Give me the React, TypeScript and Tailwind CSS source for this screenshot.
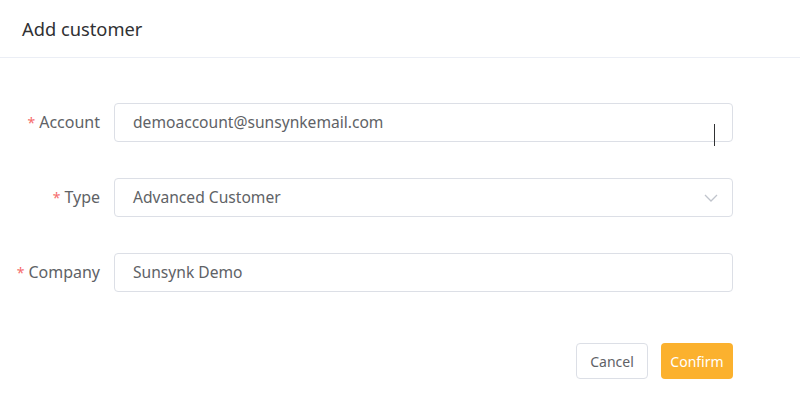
import React from 'react';

const fields = [
  { label: 'Account', value: 'demoaccount@sunsynkemail.com', select: false },
  { label: 'Type', value: 'Advanced Customer', select: true },
  { label: 'Company', value: 'Sunsynk Demo', select: false },
];

export default function App() {
  return (
    <div className="w-[800px] h-[394px] bg-white font-['Noto_Sans',sans-serif] text-[#606266]">
      {/* Header */}
      <div className="h-[58px] border-b border-[#ebeef5] flex items-center px-[22px]">
        <span className="text-[18.3px] text-[#303133]">Add customer</span>
      </div>

      {/* Form */}
      <div className="pt-[45px] pr-[67px] flex flex-col gap-[36px]">
        {fields.map((f, i) => (
          <div key={f.label} className="flex items-center gap-[14px]">
            <label className="w-[100px] text-right text-[16px] leading-none -mt-[2px]">
              <span className="text-[#f56c6c] mr-[4px] text-[14px]">*</span>
              {f.label}
            </label>
            <div className="relative flex-1 h-[39px] border border-[#dcdfe6] rounded-[4px] flex items-center pl-[18px] pr-[14px] text-[15.6px]">
              <span className="flex-1">{f.value}</span>
              {f.select && (
                <svg width="14" height="8" viewBox="0 0 14 8" fill="none" stroke="#c0c4cc" strokeWidth="1.3">
                  <path d="M1 1l6 6 6-6" />
                </svg>
              )}
              {i === 0 && (
                <span className="absolute left-[599px] top-[20px] w-px h-[22px] bg-[#303133]" />
              )}
            </div>
          </div>
        ))}
      </div>

      {/* Footer */}
      <div className="flex justify-end gap-[13px] pr-[67px] pt-[51px]">
        <button className="w-[72px] h-[36px] border border-[#dcdfe6] rounded-[4px] bg-white text-[14px] text-[#606266]">
          Cancel
        </button>
        <button className="w-[72px] h-[36px] rounded-[4px] bg-[#fbb12e] text-[14px] text-white">
          Confirm
        </button>
      </div>
    </div>
  );
}
